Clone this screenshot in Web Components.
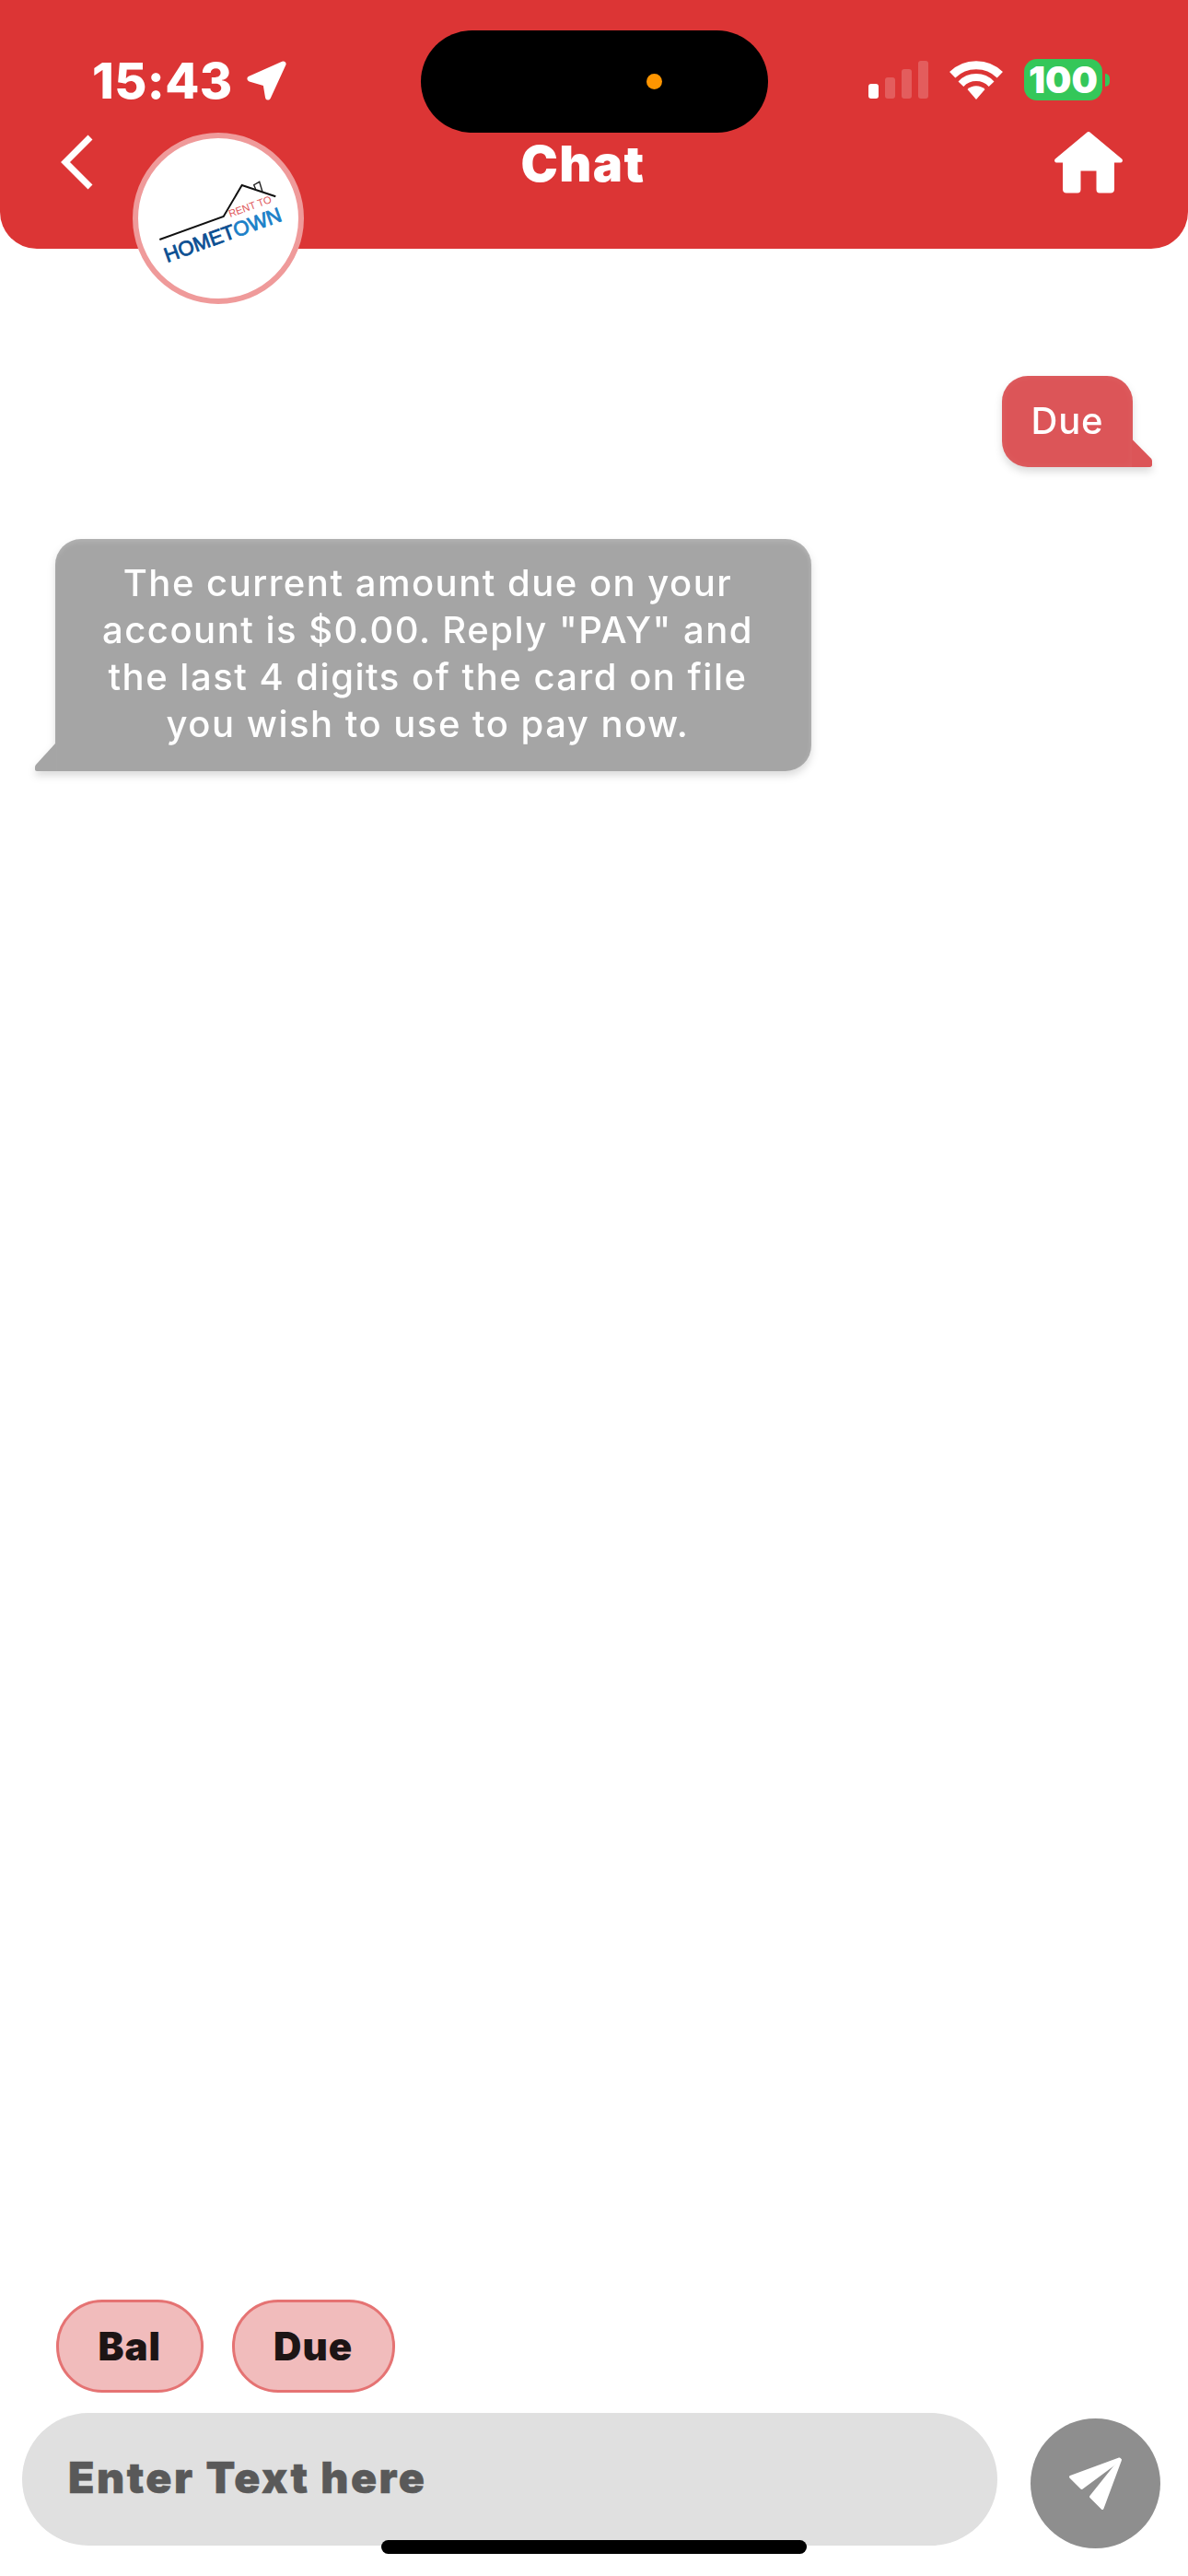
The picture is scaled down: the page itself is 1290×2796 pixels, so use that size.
<!DOCTYPE html>
<html lang="en"><head><meta charset="utf-8"><title>Chat</title>
<style>
html,body{margin:0;padding:0;background:#fff}
body{font-family:Inter,"Liberation Sans",sans-serif}
</style></head>
<body>
<chat-app>
  <chat-header slot="header"></chat-header>
  <chat-bubble side="right">Due</chat-bubble>
  <chat-bubble side="left">The current amount due on your account is $0.00. Reply "PAY" and the last 4 digits of the card on file you wish to use to pay now.</chat-bubble>
  <chat-footer slot="footer"></chat-footer>
</chat-app>
<script>
function def(name, html){
  customElements.define(name, class extends HTMLElement{
    constructor(){super();this.attachShadow({mode:'open'}).innerHTML=html;}
  });
}
def('chat-app',`<style>
:host{display:flex;flex-direction:column;width:1290px;height:2796px;overflow:hidden;position:relative;background:#fff}
.msgs{display:flex;flex-direction:column;gap:78px;padding:138px 60px 0;flex:1 1 auto}
.bar{position:absolute;left:414px;top:2757px;width:462px;height:15px;border-radius:8px;background:#000}
</style><slot name="header"></slot><div class="msgs"><slot></slot></div><slot name="footer"></slot><div class="bar"></div>`);

def('status-bar',`<style>
:host{display:flex;height:111px;padding-top:33px;align-items:center;color:#fff}
.left{display:flex;align-items:center;width:457px;flex:none;padding-left:100px;box-sizing:border-box;padding-bottom:2px;gap:15px}
.time{font:800 54px/1 Inter,sans-serif;letter-spacing:.4px}
.island{width:377px;height:111px;border-radius:56px;background:#000;display:flex;align-items:center;justify-content:center;flex:none}
.dot{width:17px;height:17px;border-radius:50%;background:#ff9500;margin-left:129px;margin-top:-1px}
.right{display:flex;align-items:center;margin-left:109px;padding-bottom:4px}
.sig{display:flex;align-items:flex-end;gap:7px;height:41px}
.sig i{display:block;width:11px;border-radius:3px;background:rgba(255,255,255,.2)}
.wifi{margin-left:23px;display:block}
.batt{margin-left:23px;width:85px;height:45px;border-radius:14px;background:#34c759;display:flex;align-items:center;justify-content:center;font:900 40px/1 Inter,sans-serif;color:#fff;flex:none}
.nub{display:block;margin-left:3px;width:5px;height:14px;background:#34c759;border-radius:0 5px 5px 0}
</style>
<div class="left"><span class="time">15:43</span>
<svg width="43" height="43" viewBox="0 0 43 43"><path d="M39.500 3.500 3.500 19.500 20.500 24.500 23 39.500Z" fill="#fff" stroke="#fff" stroke-width="6" stroke-linejoin="round"/></svg></div>
<div class="island"><span class="dot"></span></div>
<div class="right">
<div class="sig"><i style="height:16px;background:#fff"></i><i style="height:23px"></i><i style="height:32px"></i><i style="height:41px"></i></div>
<svg class="wifi" width="58" height="42" viewBox="0 0 58 42" fill="none" stroke="#fff">
<path d="M3.200 15.200A37 37 0 0 1 54.800 15.200" stroke-width="9"/>
<path d="M12.400 25.200A23 23 0 0 1 45.600 25.200" stroke-width="8"/>
<path d="M29 42 19.500 31A14 14 0 0 1 38.500 31Z" fill="#fff" stroke="none"/></svg>
<div class="batt">100</div><span class="nub"></span>
</div>`);

def('nav-bar',`<style>
:host{display:flex;height:66px;margin-top:-1px;align-items:center;justify-content:space-between;padding:0 71px 0 66px;color:#fff}
.t{font:900 54px/1 Inter,sans-serif;letter-spacing:1.500px;margin-left:20px;padding-top:4px}
svg{display:block}
</style>
<svg width="35" height="60" viewBox="0 0 35 60" fill="none"><path d="M32 3 5 30 32 57" stroke="#fff" stroke-width="7"/></svg>
<span class="t">Chat</span>
<svg width="74" height="67" viewBox="0 0 74 67"><path fill="#fff" d="M35 1 .8 29.500C-.6 31 .2 33.500 2 33.500H9V62.500C9 65 10.500 66.500 13 66.500H25C27.500 66.500 28.500 65 28.500 62.500V42.500H45.500V62.500C45.500 65 46.500 66.500 49 66.500H61C63.500 66.500 65 65 65 62.500V33.500H72C73.800 33.500 74.600 31 73.200 29.500L39 1C38 -.3 36 -.3 35 1Z"/></svg>`);

def('logo-avatar',`<style>
:host{position:absolute;left:144px;top:144px;width:186px;height:186px;box-sizing:border-box;border:6px solid #ef9a9a;border-radius:50%;background:#fff;overflow:hidden}
svg{display:block}
text{font-family:"Liberation Sans",Arial,sans-serif}
</style>
<svg width="174" height="174" viewBox="6 6 174 174">
<path d="M29.300 116 98.700 91 118.700 57 155.300 69.300" fill="none" stroke="#111" stroke-width="2"/>
<path d="M133.500 61 131.700 56.700 137.700 53.300 141 64.300" fill="none" stroke="#222" stroke-width="1.400"/>
<text transform="translate(106 92) rotate(-20)" font-size="11.200" fill="#e0575a">RENT TO</text>
<text transform="translate(37.500 141) rotate(-20)" font-size="22.200" stroke-width=".8"><tspan fill="#0b4f92" stroke="#0b4f92">HOMET</tspan><tspan fill="#1a80c8" stroke="#1a80c8">OWN</tspan></text>
</svg>`);

def('chat-header',`<style>
:host{display:block;position:relative;height:270px;flex:none;background:#dc3535;border-radius:0 0 40px 40px}
</style><status-bar></status-bar><nav-bar></nav-bar><logo-avatar></logo-avatar>`);

def('chat-bubble',`<style>
:host{display:block;position:relative;box-sizing:border-box;border-radius:28px;font:400 40px/51px Inter,sans-serif;color:#fff;text-align:center;filter:drop-shadow(0 5px 4px rgba(0,0,0,.14))}
:host([side=right]){align-self:flex-end;width:142px;padding:23px 30px 25px;background:#dc5558;font-weight:500;letter-spacing:.8px;border-bottom-right-radius:0;box-shadow:inset 0 0 8px rgba(255,255,255,.07)}
:host([side=left]){align-self:flex-start;width:821px;padding:22px 40px 26px 28px;background:#a5a5a5;font-weight:500;letter-spacing:1.500px;border-bottom-left-radius:0;box-shadow:inset 0 6px 6px -3px rgba(255,255,255,.16),inset -4px 0 5px -3px rgba(255,255,255,.14)}
svg{position:absolute;bottom:0;display:block}
:host([side=right]) .l,:host([side=left]) .r{display:none}
.r{right:-22px}.l{left:-22px}
</style><slot></slot>
<svg class="r" width="23" height="30" viewBox="0 0 23 30"><path d="M0 0H.5L20.800 20.500C22 21.800 22 23 22 24.500V27.500C22 29 21 30 19.500 30H0Z" fill="#dc5558"/></svg>
<svg class="l" width="23" height="30" viewBox="0 0 23 30"><path d="M23 0H22L1 23C.2 24 0 25 0 26V28C0 29.300 .8 30 2 30H23Z" fill="#a5a5a5"/></svg>`);

def('quick-chip',`<style>
:host{display:flex;align-items:center;height:101px;box-sizing:border-box;padding:0 42.500px;border:3px solid #e57373;border-radius:50px;background:#f1bcbc;color:#1d1515;font:900 42px/1 Inter,sans-serif;letter-spacing:1px}
</style><slot></slot>`);

def('chat-footer',`<style>
:host{display:flex;flex-direction:column;gap:22px;flex:none;padding-bottom:30px}
.chips{display:flex;gap:31px;padding-left:61px}
.row{display:flex;align-items:flex-start;padding-left:24px;gap:36px}
.input{width:1059px;height:144px;box-sizing:border-box;border-radius:72px;background:#e0e0e0;padding:0 0 4px 50px;display:flex;align-items:center;color:#595959;font:900 46.500px/1 Inter,sans-serif;letter-spacing:2.500px;-webkit-text-stroke:.5px #595959}
.send{margin-top:6px;width:141px;height:141px;border-radius:50%;background:#8e8e8e;flex:none}
svg{display:block}
</style>
<div class="chips"><quick-chip>Bal</quick-chip><quick-chip>Due</quick-chip></div>
<div class="row"><div class="input">Enter Text here</div>
<div class="send"><svg width="141" height="141" viewBox="0 0 141 141"><g fill="#fff" stroke="#fff" stroke-width="3" stroke-linejoin="round"><path d="M96.500 44 43.500 63.500 55.500 75.500 90 50Z"/><path d="M97.500 45 65.500 85 78 97.500Z"/></g></svg></div></div>`);
</script>
</body></html>
